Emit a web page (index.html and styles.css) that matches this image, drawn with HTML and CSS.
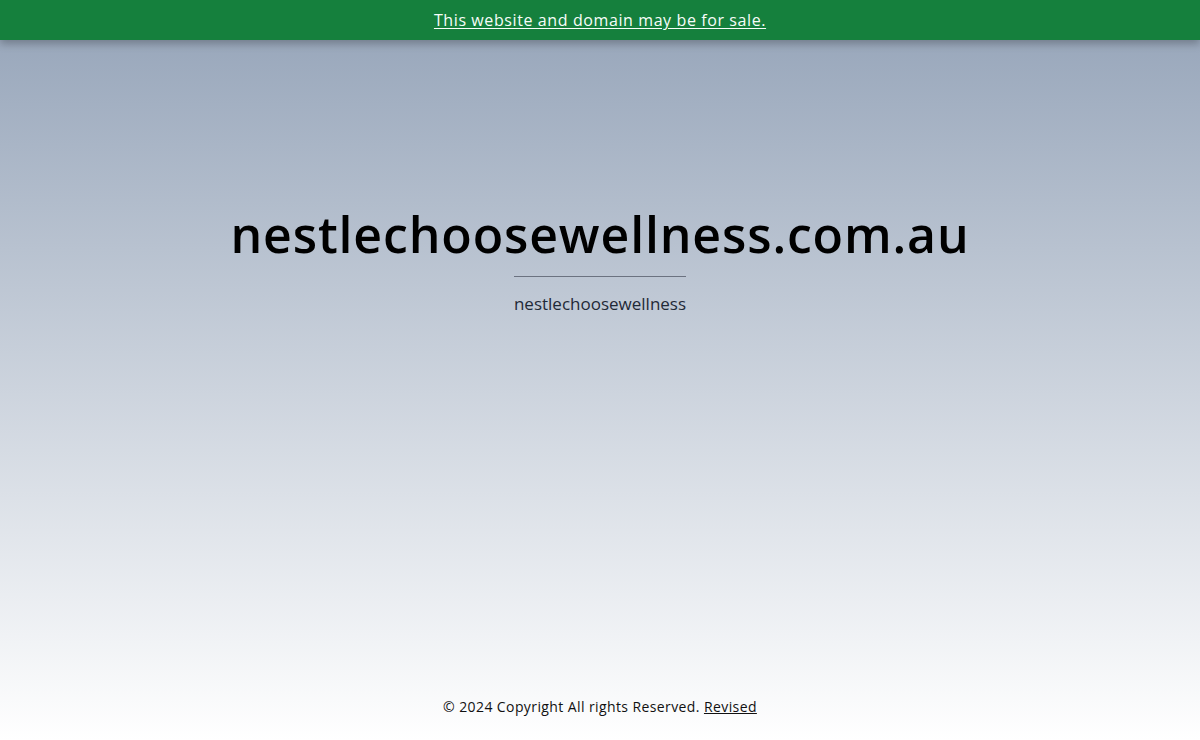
FILE: index.html
```
<!DOCTYPE html>
<html lang="en">
<head>
<meta charset="utf-8">
<title>nestlechoosewellness.com.au</title>
<link rel="stylesheet" href="styles.css">
</head>
<body>
<div class="page">
  <header class="banner"><a href="#" class="banner-link">This website and domain may be for sale.</a></header>
  <main class="hero">
    <h1 class="title">nestlechoosewellness.com.au</h1>
    <div class="sub-wrap">
      <p class="subtitle">nestlechoosewellness</p>
    </div>
  </main>
  <footer class="footer">© 2024 Copyright All rights Reserved. <a href="#" class="footer-link">Revised</a></footer>
</div>
</body>
</html>
```
FILE: styles.css
```
html, body { margin: 0; padding: 0; }
body {
  font-family: "Open Sans", "Liberation Sans", sans-serif;
  background: #fff;
}
.page {
  min-height: 740px;
  display: flex;
  flex-direction: column;
  background: linear-gradient(to bottom, #94a3b8 0%, #ffffff 100%);
}
.banner {
  height: 40px;
  background: #15803d;
  display: flex;
  align-items: center;
  justify-content: center;
  box-shadow: 0 4px 8px rgba(0,0,0,0.25);
  position: relative;
  z-index: 1;
}
.banner-link {
  color: #f7fdf9;
  font-size: 16px;
  font-weight: 500;
  letter-spacing: 0.6px;
  text-decoration: underline;
  text-underline-offset: 2px;
}
.hero {
  flex: 1;
  display: flex;
  flex-direction: column;
  align-items: center;
  padding-top: 164px;
}
.title {
  margin: 0;
  font-size: 50px;
  font-weight: 600;
  line-height: 60px;
  color: #000;
  letter-spacing: 0.85px;
}
.sub-wrap {
  margin-top: 12px;
  border-top: 1px solid #6b7280;
  padding-top: 15px;
}
.subtitle {
  margin: 0;
  font-size: 17px;
  line-height: 24px;
  color: #1f2937;
}
.footer {
  text-align: center;
  font-size: 14px;
  letter-spacing: 0.4px;
  color: #111;
  padding-bottom: 23px;
  line-height: 20px;
}
.footer-link { color: #111; text-decoration: underline; }
```
